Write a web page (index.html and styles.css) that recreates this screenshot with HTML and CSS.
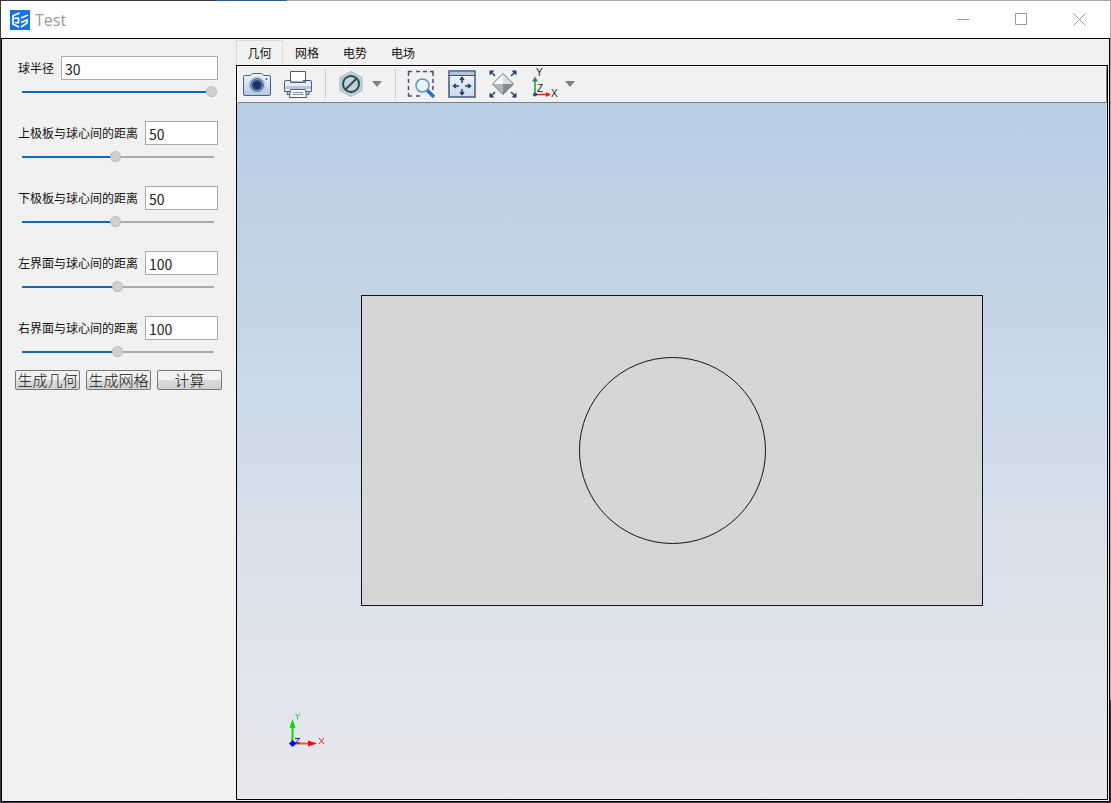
FILE: index.html
```html
<!DOCTYPE html>
<html lang="zh-CN">
<head>
<meta charset="utf-8">
<title>Test</title>
<link rel="stylesheet" href="styles.css">
</head>
<body>
<div class="window">
  <header class="titlebar">
    <svg class="logo" width="20" height="20" viewBox="0 0 20 20" aria-hidden="true">
      <rect width="20" height="20" fill="#1673ea"/>
      <g fill="none" stroke="#fff" stroke-width="1.700">
        <path d="M2.500 6l7-3"/><path d="M3 6v8l6 3"/><path d="M4 8.500l5-.5M5 12.500l4 .5M8.500 8v5"/>
        <path d="M11 8l7-3M11 12.500l7-3M17 9v4l-6 4"/>
      </g>
    </svg>
    <h1 class="title">Test</h1>
    <div class="caption">
      <button class="cap" aria-label="最小化"><svg width="13" height="13"><path d="M0 6.500h12"/></svg></button>
      <button class="cap" aria-label="最大化"><svg width="13" height="13"><path d="M.5.5h11v11H.5z"/></svg></button>
      <button class="cap" aria-label="关闭"><svg width="13" height="13"><path d="M.5.5l12 12M12.500.5l-12 12"/></svg></button>
    </div>
  </header>
  <main class="body">
    <form class="side">
      <div class="param">
        <div class="row"><label for="p1">球半径</label><input class="num" id="p1" type="text" value="30"></div>
        <input class="range full" type="range" aria-label="球半径" min="0" max="100" value="100">
      </div>
      <div class="param">
        <div class="row"><label for="p2">上极板与球心间的距离</label><input class="num" id="p2" type="text" value="50"></div>
        <input class="range" type="range" aria-label="上极板与球心间的距离" min="0" max="100" value="48">
      </div>
      <div class="param">
        <div class="row"><label for="p3">下极板与球心间的距离</label><input class="num" id="p3" type="text" value="50"></div>
        <input class="range" type="range" aria-label="下极板与球心间的距离" min="0" max="100" value="48">
      </div>
      <div class="param">
        <div class="row"><label for="p4">左界面与球心间的距离</label><input class="num" id="p4" type="text" value="100"></div>
        <input class="range" type="range" aria-label="左界面与球心间的距离" min="0" max="100" value="49">
      </div>
      <div class="param">
        <div class="row"><label for="p5">右界面与球心间的距离</label><input class="num" id="p5" type="text" value="100"></div>
        <input class="range" type="range" aria-label="右界面与球心间的距离" min="0" max="100" value="49">
      </div>
      <div class="actions">
        <button type="button" class="btn">生成几何</button>
        <button type="button" class="btn">生成网格</button>
        <button type="button" class="btn">计算</button>
      </div>
    </form>
    <section class="work">
      <nav class="tabs" role="tablist">
        <button class="tab active" role="tab" aria-selected="true">几何</button>
        <button class="tab" role="tab">网格</button>
        <button class="tab" role="tab">电势</button>
        <button class="tab" role="tab">电场</button>
      </nav>
      <div class="panel">
        <div class="toolbar">
          <button class="tool" aria-label="截图">
            <svg width="28" height="28" viewBox="0 0 28 28">
              <defs>
                <linearGradient id="cam" x2="0" y2="1"><stop stop-color="#f4f8fc"/><stop offset="1" stop-color="#b3c9e2"/></linearGradient>
                <radialGradient id="lens"><stop stop-color="#18305e"/><stop offset=".6" stop-color="#213c70"/><stop offset=".75" stop-color="#7796c0"/><stop offset="1" stop-color="#3d5a8d"/></radialGradient>
                <linearGradient id="pane" x2="0" y2="1"><stop stop-color="#f6f9fc"/><stop offset="1" stop-color="#cbd8e6"/></linearGradient>
              </defs>
              <path d="M2 5.500h5L9.500 3.500h9L21 5.500h5q1.500 0 1.500 1.500v17q0 1.500-1.500 1.500H2Q.5 25.500.5 24V7Q.5 5.500 2 5.500z" fill="url(#cam)" stroke="#45628f"/>
              <circle cx="14" cy="15" r="8" fill="#f4f8fc" stroke="#aebfd5"/>
              <circle cx="14" cy="15" r="7" fill="url(#lens)"/>
              <circle cx="23.500" cy="9" r="1" fill="#3d5a8d"/>
            </svg>
          </button>
          <button class="tool" aria-label="打印">
            <svg width="28" height="28" viewBox="0 0 28 28">
              <g stroke="#4a5e82">
                <path d="M6.500 10V1.500h15V12h-15z" fill="#fff"/>
                <path d="M2 10.500h4.500v2h15v-2H26q1.500 0 1.500 1.500v9.500h-27V12q0-1.500 1.500-1.500z" fill="#e8eef6"/>
                <path d="M3 21.500h22v3H3z" fill="#bccadd"/>
                <path d="M6.500 19.500h15l1 8h-17z" fill="#fff"/>
                <path d="M9 22.500h10M8.500 24.500h11" stroke="#7f90aa"/>
              </g>
              <path d="M1 16h26v3H1z" fill="#b9c7db"/>
              <path d="M19 10.500h7" stroke="#26426f" stroke-dasharray="2 1"/>
            </svg>
          </button>
          <span class="sep"></span>
          <button class="tool" aria-label="隐藏">
            <svg width="28" height="28" viewBox="0 0 28 28">
              <path d="M14 1.500l11 6v13l-11 6-11-6v-13z" fill="#c2d3d9" stroke="#9eb6be"/>
              <path d="M14 4l9 5v10l-9 5-9-5V9z" fill="#a7bfc6"/>
              <circle cx="14" cy="14" r="8" fill="#c0d3d7" stroke="#2f4b58" stroke-width="2"/>
              <path d="M8.500 19.500l11-11" stroke="#2f4b58" stroke-width="2"/>
            </svg>
          </button>
          <button class="drop" aria-label="隐藏选项"><svg width="10" height="6"><path d="M0 0h10L5 6z" fill="#808080"/></svg></button>
          <span class="sep"></span>
          <button class="tool" aria-label="框选缩放">
            <svg width="28" height="28" viewBox="0 0 28 28">
              <path d="M1.500 6V1.500H5M9 1.500h4M16 1.500h4M23 1.500h3V6M1.500 9v4M1.500 16v4M1.500 23v3H5M9 26h4M26 9v4M26 16v4" fill="none" stroke="#3c5078" stroke-width="1.500"/>
              <path d="M20 20l7 7" stroke="#2175b9" stroke-width="3.500"/>
              <circle cx="15.500" cy="15.500" r="6.500" fill="#e6f3fb" stroke="#5f97c2" stroke-width="1.500"/>
              <path d="M12 15q0-3 3-4" fill="none" stroke="#fff" stroke-width="2"/>
            </svg>
          </button>
          <button class="tool" aria-label="缩放到窗口">
            <svg width="28" height="28" viewBox="0 0 28 28">
              <path d="M1 1h26v26H1z" fill="url(#pane)" stroke="#405880" stroke-width="1.500"/>
              <path d="M2 2h24v3H2z" fill="#b4c5da"/><path d="M1 5.500h26" stroke="#405880"/>
              <g fill="none" stroke="#213c6c" stroke-width="1.500"><path d="M14 8v5M14 19v5M6 16h5M17 16h5"/>
              <path d="M12 10l2-2.500 2 2.500M12 22l2 2.500 2-2.500M8 14l-2.500 2 2.500 2M20 14l2.500 2-2.500 2"/></g>
            </svg>
          </button>
          <button class="tool" aria-label="缩放到全部">
            <svg width="28" height="28" viewBox="0 0 28 28">
              <path d="M14 3.500v10.500H3.500z" fill="#fafafa"/><path d="M14 3.500L24.500 14H14z" fill="#dcdee0"/>
              <path d="M3.500 14H14v10.500z" fill="#b4b7ba"/><path d="M14 14h10.500L14 24.500z" fill="#85898d"/>
              <path d="M14 3.500L24.500 14 14 24.500 3.500 14z" fill="none" stroke="#627182"/>
              <path d="M2 2l4 4M26 2l-4 4M2 26l4-4M26 26l-4-4" stroke="#243e6b" stroke-width="1.500"/>
              <path d="M.5.5h5l-5 5zM27.500.5v5l-5-5zM.5 27.500v-5l5 5zM27.500 27.500h-5l5-5z" fill="#243e6b"/>
            </svg>
          </button>
          <button class="tool" aria-label="视图方向">
            <svg class="axis" width="28" height="28" viewBox="0 0 28 28">
              <path d="M5 24.500V10" stroke="#2a9147" stroke-width="1.500"/><path d="M5 6.500l3 5H2z" fill="#2a9147"/>
              <path d="M5 24.500h12" stroke="#f31b17" stroke-width="1.500"/><path d="M21 24.500l-5-2.500v5z" fill="#f31b17"/>
              <circle cx="5" cy="24.500" r="2" fill="#184fa3"/>
              <text x="6" y="6">Y</text><text x="7" y="22">Z</text><text x="21" y="27">X</text>
            </svg>
          </button>
          <button class="drop" aria-label="视图选项"><svg width="10" height="6"><path d="M0 0h10L5 6z" fill="#808080"/></svg></button>
        </div>
        <div class="stage">
          <svg class="model" viewBox="0 0 622 311" role="img" aria-label="几何模型">
            <rect x=".5" y=".5" width="621" height="310" fill="#d6d6d6" stroke="#15151a"/>
            <circle cx="311.500" cy="155.500" r="93" fill="none" stroke="#15151a"/>
          </svg>
          <svg class="triad" width="40" height="40" viewBox="0 0 40 40">
            <path d="M6.500 33V14" stroke="#00dc00" stroke-width="2"/><path d="M6.500 8l3 9h-6z" fill="#00dc00"/>
            <path d="M7 32.500h18" stroke="#ff5050" stroke-width="2"/><path d="M31 32.500l-9-3v6z" fill="#f00"/>
            <path d="M6.500 29l4 3.500-4 3.500L3 32.500z" fill="#00f"/>
            <g fill="none"><path d="M9.500 2.500l2 3 2-3M11.500 5v3.500" stroke="#20d020"/>
            <path d="M9 27.500h4.500l-4 4.500H14" stroke="#1010c0"/>
            <path d="M33 27l5 6M38 27l-5 6" stroke="#f02020"/></g>
          </svg>
        </div>
      </div>
    </section>
  </main>
</div>
</body>
</html>
```
FILE: styles.css
```css
* { box-sizing: border-box; }
body {
  margin: 0;
  height: 100vh;
  padding: 1px;
  display: flex;
  font: 12px/16px "Noto Sans CJK SC", sans-serif;
  color: #111;
  background:
    linear-gradient(90deg, #39344a 216px, #2b5a85 216px 287px, #aaa 287px) top / 100% 1px no-repeat,
    linear-gradient(#aaa 700px, #3a3538 700px) right / 1px 100% no-repeat,
    #3a3848;
}
button { border: 0; padding: 0; margin: 0; background: none; font: inherit; color: inherit; }
svg { display: block; }

.window { flex: 1; min-width: 0; display: flex; flex-direction: column; background: #fff; }
.titlebar { height: 37px; display: flex; align-items: center; padding-left: 9px; }
.title { margin: 0 auto 0 5px; font: 16px/20px "Open Sans", sans-serif; color: #999; }
.caption { display: flex; padding-right: 2px; }
.cap { width: 58px; height: 36px; display: grid; place-items: center; }
.cap path { fill: none; stroke: #999; }

.body {
  flex: 1;
  min-height: 0;
  display: flex;
  border: 1px solid #000;
  background: #f1f1f1;
}

.side { width: 234px; padding: 17px 0 0 13px; flex: none; }
.param { width: 203px; height: 65px; padding-left: 3px; }
.row { display: flex; align-items: center; gap: 7px; }
.num {
  flex: 1;
  min-width: 0;
  height: 24px;
  padding: 1px 3px 0;
  border: 1px solid #aaa;
  background: #fff;
  font: 14px/20px "Noto Sans CJK SC", sans-serif;
  color: #222;
}
.range {
  appearance: none;
  display: block;
  width: 195px;
  height: 11px;
  margin: 6px 0 0 4px;
  background:
    linear-gradient(90deg, #0f69ba 50%, #aaa 50%) left center / 192px 2px no-repeat;
}
.range.full { background-image: linear-gradient(#0f69ba, #0f69ba); }
.range::-webkit-slider-thumb {
  appearance: none;
  width: 11px;
  height: 11px;
  border: 1px dotted #aaa;
  border-radius: 50%;
  background: #d0d0d0;
}
.actions { display: flex; gap: 6px; margin-top: -11px; }
.btn {
  width: 65px;
  height: 20px;
  border: 1px solid #777;
  border-radius: 2px;
  background: linear-gradient(#f2f2f2 50%, #dcdcdc 50%, #d0d0d0);
  font-size: 15px;
  font-weight: 300;
  line-height: 16px;
  white-space: nowrap;
}

.work { flex: 1; min-width: 0; display: flex; flex-direction: column; padding: 1px 1px 1px 0; }
.tabs { display: flex; height: 25px; }
.tab { width: 48px; height: 25px; }
.tab.active {
  width: 47px;
  border: 1px solid #d9d9d9;
  border-bottom: 0;
  background: #f1f1f1;
}
.panel { flex: 1; min-height: 0; display: flex; flex-direction: column; border: 1px solid #000; }
.toolbar {
  display: flex;
  align-items: center;
  height: 37px;
  padding: 0 5px 2px;
  border: 1px solid #fff;
  border-right-color: #808080;
  border-bottom-color: #808080;
  background: #f1f1f1;
}
.tool { width: 28px; margin-right: 13px; }
.sep { width: 1px; height: 30px; margin-right: 11px; background: #ccc; }
.drop { width: 10px; margin-right: 13px; }
.tool + .drop { margin-left: -6px; }
.axis { font: 10px/10px "Liberation Sans", sans-serif; fill: #222; overflow: visible; }

.stage {
  flex: 1;
  min-height: 0;
  position: relative;
  display: grid;
  place-items: center;
  padding-bottom: 1px;
  border-right: 1px solid #dde4ec;
  background: linear-gradient(#b8cde4, #c5d5e6 30%, #d9e1eb 65%, #e8e8ec);
}
.model { width: 622px; max-width: 90%; }
.triad { position: absolute; left: 49px; bottom: 48px; }
```
